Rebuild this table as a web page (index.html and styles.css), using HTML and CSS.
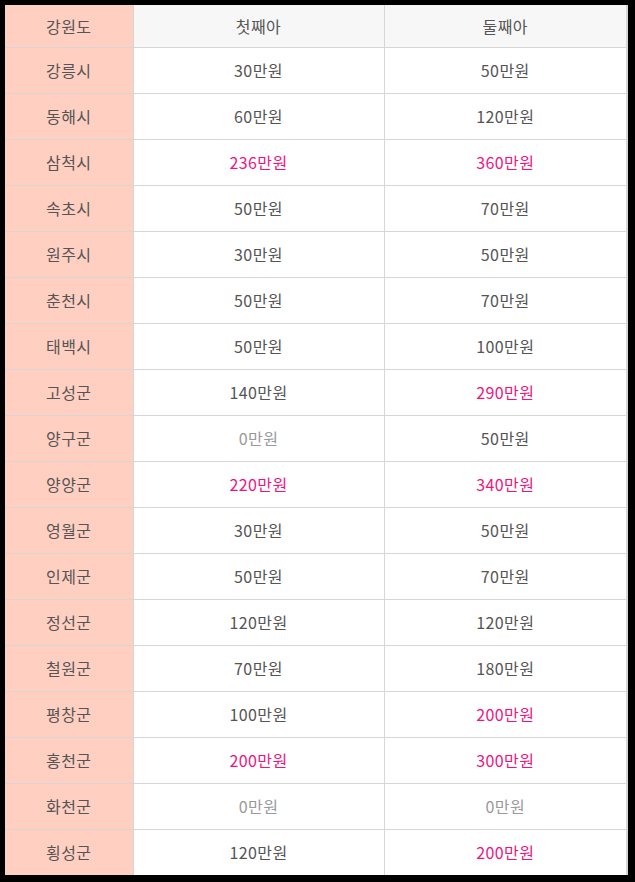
FILE: index.html
```html
<!DOCTYPE html>
<html lang="ko">
<head>
<meta charset="utf-8">
<link rel="stylesheet" href="styles.css">
</head>
<body>
<div class="frame">
<table class="grid">
<colgroup><col class="c1"><col class="c2"><col class="c3"></colgroup>
<thead>
<tr><th class="region">강원도</th><th>첫째아</th><th>둘째아</th></tr>
</thead>
<tbody>
<tr><td class="region">강릉시</td><td>30만원</td><td>50만원</td></tr>
<tr><td class="region">동해시</td><td>60만원</td><td>120만원</td></tr>
<tr><td class="region">삼척시</td><td class="hot">236만원</td><td class="hot">360만원</td></tr>
<tr><td class="region">속초시</td><td>50만원</td><td>70만원</td></tr>
<tr><td class="region">원주시</td><td>30만원</td><td>50만원</td></tr>
<tr><td class="region">춘천시</td><td>50만원</td><td>70만원</td></tr>
<tr><td class="region">태백시</td><td>50만원</td><td>100만원</td></tr>
<tr><td class="region">고성군</td><td>140만원</td><td class="hot">290만원</td></tr>
<tr><td class="region">양구군</td><td class="none">0만원</td><td>50만원</td></tr>
<tr><td class="region">양양군</td><td class="hot">220만원</td><td class="hot">340만원</td></tr>
<tr><td class="region">영월군</td><td>30만원</td><td>50만원</td></tr>
<tr><td class="region">인제군</td><td>50만원</td><td>70만원</td></tr>
<tr><td class="region">정선군</td><td>120만원</td><td>120만원</td></tr>
<tr><td class="region">철원군</td><td>70만원</td><td>180만원</td></tr>
<tr><td class="region">평창군</td><td>100만원</td><td class="hot">200만원</td></tr>
<tr><td class="region">홍천군</td><td class="hot">200만원</td><td class="hot">300만원</td></tr>
<tr><td class="region">화천군</td><td class="none">0만원</td><td class="none">0만원</td></tr>
<tr><td class="region">횡성군</td><td>120만원</td><td class="hot">200만원</td></tr>
</tbody>
</table>
</div>
</body>
</html>
```
FILE: styles.css
```css
html, body {
  margin: 0;
  padding: 0;
  background: #000;
}
.frame {
  width: 635px;
  height: 882px;
  box-sizing: border-box;
  padding: 5px 8px 7px 5px;
  background: #000;
}
.grid {
  width: 622px;
  border-collapse: collapse;
  table-layout: fixed;
  background: #fff;
  font-family: "Noto Sans CJK KR", "Noto Sans", sans-serif;
  font-size: 16px;
  letter-spacing: 0.4px;
  color: #555;
}
.c1 { width: 128px; }
.c2 { width: 251px; }
.c3 { width: 243px; }
.grid th, .grid td {
  border: 1px solid #d6d6d6;
  padding: 0;
  text-align: center;
  font-weight: normal;
  height: 45px;
  line-height: 43px;
}
.grid thead th {
  background: #f7f7f7;
  height: 42px;
  line-height: 38px;
  border-top: none;
}
.grid tr > :first-child { border-left: none; }
.grid tr > :last-child { border-right: 2px solid #d6d6d6; }
.grid tbody tr:last-child td { border-bottom: none; }
.grid .region {
  background: #ffcfc1;
}
.grid .hot { color: #f0147f; }
.grid .none { color: #9a9a9a; }
```
